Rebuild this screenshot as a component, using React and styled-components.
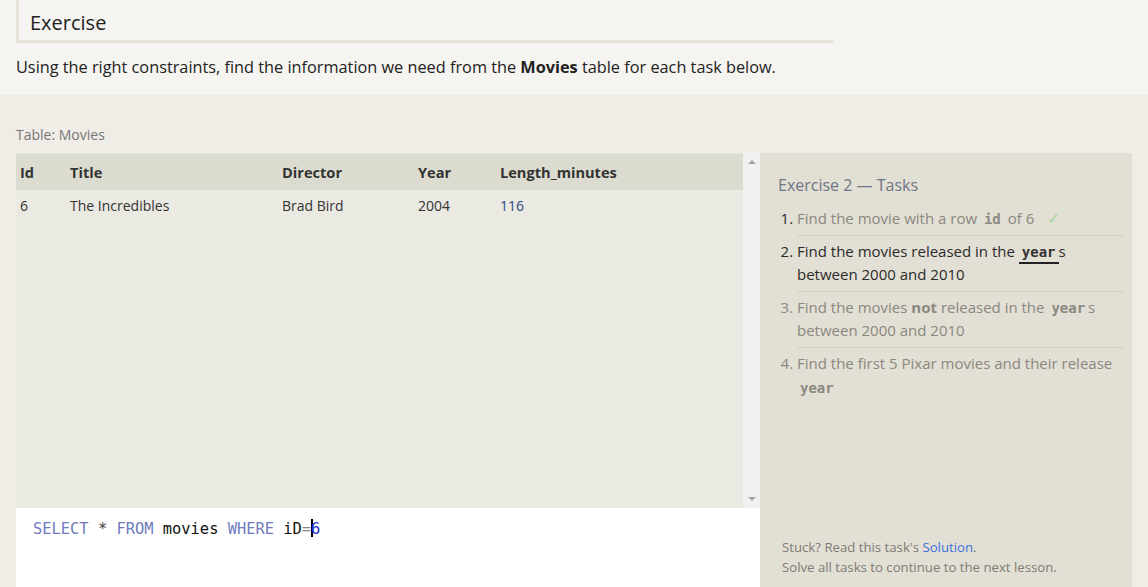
import React from 'react'
import styled, { createGlobalStyle } from 'styled-components'

const GlobalStyle = createGlobalStyle`
  html, body {
    margin: 0;
    padding: 0;
    background: #efede6;
    font-family: "Open Sans", "Liberation Sans", sans-serif;
    overflow: hidden;
  }
`

const Page = styled.div`
  width: 1148px;
  height: 587px;
  overflow: hidden;
  background: #efede6;
`

const Intro = styled.section`
  background: #f5f4f0;
  height: 95px;
  padding-left: 16px;
  box-sizing: border-box;
`

const Heading = styled.h2`
  margin: 0;
  width: 817px;
  height: 43px;
  box-sizing: border-box;
  padding: 10px 0 0 11px;
  border-left: 3px solid #e5e3d8;
  border-bottom: 3px solid #e5e3d8;
  font-size: 20px;
  font-weight: 400;
  color: #222;
  line-height: 26px;
`

const Lead = styled.p`
  margin: 12px 0 0;
  font-size: 16.3px;
  line-height: 24px;
  color: #222;

  strong {
    font-weight: 700;
  }
`

const Workspace = styled.section`
  display: grid;
  grid-template-columns: 744px 372px;
  grid-template-rows: 58px 434px;
  padding-left: 16px;
`

const TableLabel = styled.div`
  grid-column: 1 / 3;
  padding-top: 30px;
  font-size: 14px;
  line-height: 20px;
  color: #777;
`

const LeftColumn = styled.div`
  display: flex;
  flex-direction: column;
`

const TableArea = styled.div`
  display: flex;
  height: 355px;
  background: #eae9e2;
`

const TableScroll = styled.div`
  flex: 1;
`

const Table = styled.table`
  width: 100%;
  table-layout: fixed;
  border-collapse: collapse;
`

const HeadCell = styled.th`
  text-align: left;
  background: #dcdbd0;
  height: 35px;
  padding: 0 0 1px 4px;
  width: ${p => (p.$w ? `${p.$w}px` : 'auto')};
  font-size: 14.6px;
  font-weight: 700;
  color: #333;
  border-top: 1px solid #e4e3db;
`

const Cell = styled.td`
  padding: 3px 0 0 4px;
  height: 24px;
  font-size: 14px;
  color: ${p => (p.$num ? '#2a4a8a' : '#333')};
`

const Scrollbar = styled.div`
  width: 17px;
  background: #f1f1f1;
  display: flex;
  flex-direction: column;
  justify-content: space-between;
  align-items: center;
  padding: 7px 0;
  box-sizing: border-box;
`

const Arrow = styled.span`
  width: 0;
  height: 0;
  border-left: 4px solid transparent;
  border-right: 4px solid transparent;
  ${p =>
    p.$down
      ? 'border-top: 4px solid #a3a3a3;'
      : 'border-bottom: 4px solid #a3a3a3;'}
`

const Editor = styled.div`
  flex: 1;
  background: #fff;
  padding: 10px 0 0 17px;
  font-family: "DejaVu Sans Mono", "Liberation Mono", monospace;
  font-size: 15.4px;
  line-height: 22px;
  color: #111;
  white-space: pre;
`

const Kw = styled.span`
  color: #6f7bbd;
`

const Op = styled.span`
  color: ${p => p.$c || '#444'};
`

const Caret = styled.span`
  display: inline-block;
  width: 0;
  height: 18px;
  border-left: 2px solid #000;
  vertical-align: -3px;
  margin-right: -2px;
`

const TaskPanel = styled.aside`
  background: #e2dfd4;
  display: flex;
  flex-direction: column;
  padding: 21px 7px 10px 18px;
  box-sizing: border-box;
`

const TaskTitle = styled.h3`
  margin: 0 0 7px;
  font-size: 16px;
  font-weight: 400;
  line-height: 22px;
  color: #6e7585;
`

const TaskList = styled.ol`
  margin: 0;
  padding: 0 0 0 19px;
  list-style: decimal outside;
`

const Task = styled.li`
  font-size: 15px;
  line-height: 23.6px;
  padding: 4px 0 4px;
  color: ${p => (p.$state === 'active' ? '#2b2b2b' : '#8b8880')};
  border-bottom: 1px solid ${p => (p.$last ? 'transparent' : '#d3d0c5')};

  &::marker {
    color: ${p => (p.$state === 'upcoming' ? '#8b8880' : '#2b2b2b')};
  }

  b {
    font-weight: 700;
  }
`

const Code = styled.code`
  font-family: "DejaVu Sans Mono", "Liberation Mono", monospace;
  font-weight: 700;
  font-size: 14px;
  line-height: 1;
  margin: 0 3px;
  color: #8b8880;
`

const MarkedCode = styled(Code)`
  margin: 0;
  padding: 0 3px 2px;
  border-bottom: 2px solid #222;
  color: #333;
`

const Check = styled.span`
  color: #a6d4a0;
  font-size: 16px;
  line-height: 1;
  margin-left: 9px;
`

const TaskFooter = styled.div`
  margin-top: auto;
  padding-left: 4px;
  font-size: 13.2px;
  line-height: 20px;
  color: #7f7c75;

  a {
    color: #3c6fe0;
    text-decoration: none;
  }
`

const columns = [
  { key: 'id', label: 'Id', w: 46 },
  { key: 'title', label: 'Title', w: 208 },
  { key: 'director', label: 'Director', w: 132 },
  { key: 'year', label: 'Year', w: 78 },
  { key: 'length', label: 'Length_minutes' }
]

const rows = [
  { id: 6, title: 'The Incredibles', director: 'Brad Bird', year: 2004, length: 116 }
]

const App = () => (
  <Page>
    <GlobalStyle />
    <Intro>
      <Heading>Exercise</Heading>
      <Lead>
        Using the right constraints, find the information we need from the <strong>Movies</strong> table for each task below.
      </Lead>
    </Intro>
    <Workspace>
      <TableLabel>Table: Movies</TableLabel>
      <LeftColumn>
        <TableArea>
          <TableScroll>
            <Table>
              <thead>
                <tr>
                  {columns.map(c => (
                    <HeadCell key={c.key} $w={c.w}>{c.label}</HeadCell>
                  ))}
                </tr>
              </thead>
              <tbody>
                {rows.map(r => (
                  <tr key={r.id}>
                    {columns.map(c => (
                      <Cell key={c.key} $num={c.key === 'length'}>{r[c.key]}</Cell>
                    ))}
                  </tr>
                ))}
              </tbody>
            </Table>
          </TableScroll>
          <Scrollbar>
            <Arrow />
            <Arrow $down />
          </Scrollbar>
        </TableArea>
        <Editor>
          <Kw>SELECT</Kw> <Op>*</Op> <Kw>FROM</Kw> movies <Kw>WHERE</Kw> iD<Op $c="#888">=</Op><Caret /><Op $c="#2233cc">6</Op>
        </Editor>
      </LeftColumn>
      <TaskPanel>
        <TaskTitle>Exercise 2 — Tasks</TaskTitle>
        <TaskList>
          <Task $state="done">
            Find the movie with a row <Code>id</Code> of 6 <Check>✓</Check>
          </Task>
          <Task $state="active">
            Find the movies released in the <MarkedCode>year</MarkedCode>s between 2000 and 2010
          </Task>
          <Task $state="upcoming">
            Find the movies <b>not</b> released in the <Code>year</Code>s between 2000 and 2010
          </Task>
          <Task $state="upcoming" $last>
            Find the first 5 Pixar movies and their release <Code>year</Code>
          </Task>
        </TaskList>
        <TaskFooter>
          Stuck? Read this task's <a href="#solution">Solution</a>.
          <br />
          Solve all tasks to continue to the next lesson.
        </TaskFooter>
      </TaskPanel>
    </Workspace>
  </Page>
)

export default App
